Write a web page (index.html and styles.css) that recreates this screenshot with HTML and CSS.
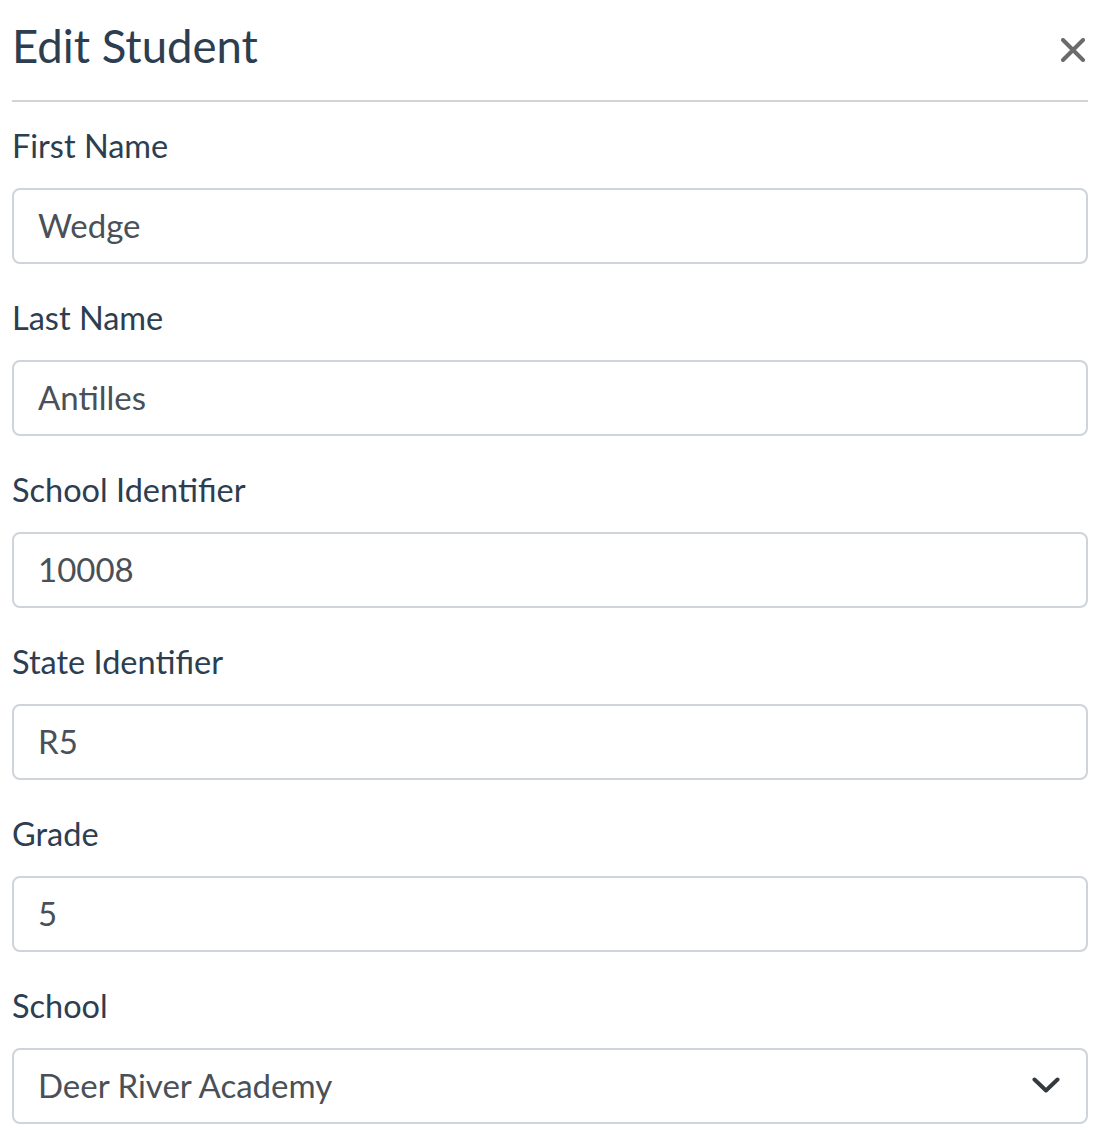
FILE: index.html
```html
<!DOCTYPE html>
<html>
<head>
    <title>Edit Student</title>
    <link rel="stylesheet" href="styles.css">
</head>
<body>
    <div class="modal">
        <!-- Header with title and close button -->
        <div class="modal-header">
            <h4 class="modal-title">Edit Student</h4>
            <button type="button" class="close" aria-label="Close">
                <svg width="24" height="24" viewBox="0 0 24 24">
                    <path d="M2 2 L22 22 M22 2 L2 22" stroke="#6b6b6b" stroke-width="4" stroke-linecap="round" fill="none"/>
                </svg>
            </button>
        </div>

        <!-- Student form -->
        <form class="modal-body">
            <div class="form-group">
                <label for="first-name">First Name</label>
                <input type="text" id="first-name" class="form-control" value="Wedge">
            </div>
            <div class="form-group">
                <label for="last-name">Last Name</label>
                <input type="text" id="last-name" class="form-control" value="Antilles">
            </div>
            <div class="form-group">
                <label for="school-id">School Identifier</label>
                <input type="text" id="school-id" class="form-control" value="10008">
            </div>
            <div class="form-group">
                <label for="state-id">State Identifier</label>
                <input type="text" id="state-id" class="form-control" value="R5">
            </div>
            <div class="form-group">
                <label for="grade">Grade</label>
                <input type="text" id="grade" class="form-control" value="5">
            </div>
            <div class="form-group">
                <label for="school">School</label>
                <div class="select-wrap">
                    <select id="school" class="form-control">
                        <option>Deer River Academy</option>
                    </select>
                    <svg class="chevron" width="28" height="16" viewBox="0 0 28 16">
                        <path d="M2.5 2.5 L14 13.5 L25.5 2.5" stroke="#343a40" stroke-width="4" stroke-linecap="round" stroke-linejoin="round" fill="none"/>
                    </svg>
                </div>
            </div>
        </form>
    </div>
</body>
</html>
```

FILE: styles.css
```css
body {
    margin: 0;
    padding: 0;
    background: #fff;
    font-family: Lato, "Open Sans", sans-serif;
}

.modal {
    padding: 0 8px 0 12px;
}

/* Header */
.modal-header {
    display: flex;
    justify-content: space-between;
    align-items: center;
    height: 93px;
    padding-bottom: 7px;
    border-bottom: 2px solid #d3d3d3;
}

.modal-title {
    margin: 0;
    font-size: 45.5px;
    font-weight: 400;
    line-height: 1.2;
    color: #2c3e50;
}

.close {
    background: none;
    border: none;
    padding: 0;
    margin: 6px 3px 0 0;
    width: 24px;
    height: 24px;
    cursor: pointer;
    display: flex;
}

/* Form */
.modal-body {
    padding-top: 22px;
}

.form-group {
    margin-bottom: 32px;
}

label {
    display: block;
    font-size: 32.5px;
    line-height: 44px;
    margin-bottom: 20px;
    color: #2c3e50;
}

.form-control {
    display: block;
    box-sizing: border-box;
    width: 100%;
    height: 76px;
    padding: 0 24px 3px;
    font-family: inherit;
    font-size: 33px;
    color: #495057;
    background: #fff;
    border: 2px solid #ced4da;
    border-radius: 8px;
    outline: none;
}

.select-wrap {
    position: relative;
}

select.form-control {
    appearance: none;
    -webkit-appearance: none;
}

.chevron {
    position: absolute;
    right: 28px;
    top: 29px;
    pointer-events: none;
}
```
